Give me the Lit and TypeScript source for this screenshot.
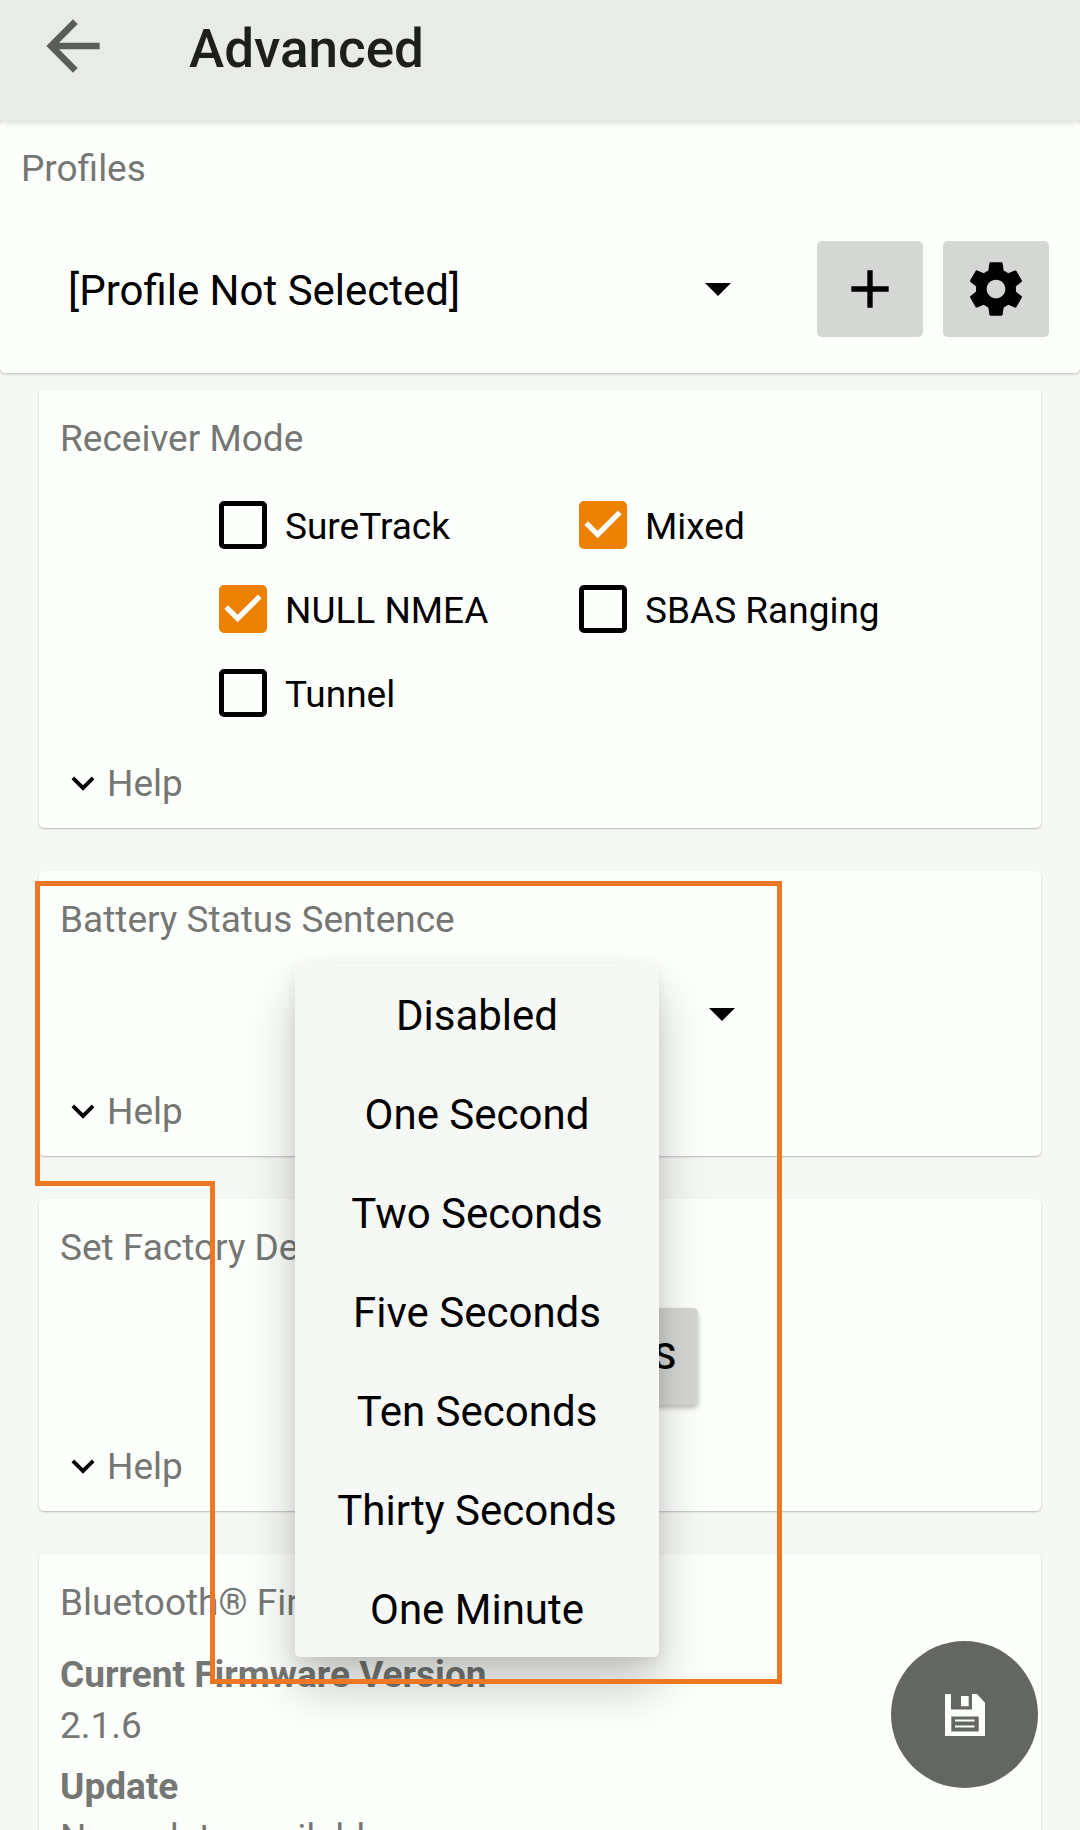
import { LitElement, html, css, svg, nothing } from "lit";
import { customElement, property, state } from "lit/decorators.js";

const ICONS = {
  back: svg`<path d="M20 11H7.83l5.59-5.59L12 4l-8 8 8 8 1.41-1.41L7.83 13H20v-2z"/>`,
  add: svg`<path d="M19 13h-6v6h-2v-6H5v-2h6V5h2v6h6v2z"/>`,
  gear: svg`<path d="M19.43 12.98c.04-.32.07-.64.07-.98s-.03-.66-.07-.98l2.11-1.65c.19-.15.24-.42.12-.64l-2-3.46c-.12-.22-.39-.3-.61-.22l-2.49 1c-.52-.4-1.08-.73-1.69-.98l-.38-2.65C14.46 2.18 14.25 2 14 2h-4c-.25 0-.46.18-.49.42l-.38 2.65c-.61.25-1.17.59-1.69.98l-2.49-1c-.23-.09-.49 0-.61.22l-2 3.46c-.13.22-.07.49.12.64l2.11 1.65c-.04.32-.07.65-.07.98s.03.66.07.98l-2.11 1.65c-.19.15-.24.42-.12.64l2 3.46c.12.22.39.3.61.22l2.49-1c.52.4 1.08.73 1.69.98l.38 2.65c.03.24.24.42.49.42h4c.25 0 .46-.18.49-.42l.38-2.65c.61-.25 1.17-.59 1.69-.98l2.49 1c.23.09.49 0 .61-.22l2-3.46c.12-.22.07-.49-.12-.64l-2.11-1.65zM12 15.5c-1.93 0-3.5-1.57-3.5-3.5s1.57-3.5 3.5-3.5 3.5 1.57 3.5 3.5-1.57 3.5-3.5 3.5z"/>`,
  more: svg`<path d="M16.59 8.59L12 13.17 7.41 8.59 6 10l6 6 6-6z"/>`,
  save: svg`<path fill-rule="evenodd" d="M0 0H6V15.5H27V0H32L40 8.7V42H0ZM6.3 22.5V37.5H33.7V22.5ZM16 2H23.7V12.3H16ZM10 25.5H29.5V27.5H10ZM10 31.6H29.5V33.6H10Z"/>`,
};

const sheet = css`
  * { box-sizing: border-box; }
  button, select, input { font: inherit; color: inherit; margin: 0; }
  button { border: 0; padding: 0; background: none; cursor: pointer; }
  svg { display: block; fill: currentColor; }
`;

@customElement("option-spinner")
class OptionSpinner extends LitElement {
  @property() label = "";
  @property({ type: Array }) options: string[] = [];
  @property({ type: Boolean, reflect: true }) centered = false;

  static styles = [sheet, css`
    :host { display: block; }
    .spinner { display: grid; align-items: center; height: 100%; }
    .select {
      grid-area: 1 / 1; width: 100%; height: 100%; appearance: none; border: 0;
      background: none; padding: 3px 126px 0 0; font-size: 42px; line-height: 50px;
    }
    :host([centered]) .select { text-align: center; text-align-last: center; }
    .caret { grid-area: 1 / 1; justify-self: end; margin-right: 50px; pointer-events: none; }
  `];

  render() {
    return html`<div class="spinner">
      <select class="select" aria-label=${this.label}>
        ${this.options.map((o) => html`<option>${o}</option>`)}
      </select>
      <svg class="caret" width="26" height="13" viewBox="0 0 26 13"><path d="M0 0H26L13 13Z"/></svg>
    </div>`;
  }
}

@customElement("setting-card")
class SettingCard extends LitElement {
  @property() heading = "";
  @property({ type: Boolean }) help = false;

  static styles = [sheet, css`
    :host {
      display: block; padding: 27px 21px 22px; border-radius: 5px; background: #fdfffc;
      box-shadow: 0 1px 2px rgba(0, 0, 0, .25);
    }
    .heading { margin: 0 0 22px; font-size: 37px; line-height: 44px; font-weight: 400; color: #757774; }
    .help {
      display: flex; align-items: center; margin-top: 27px;
      font-size: 37px; line-height: 44px; color: #757774;
    }
    .chevron { color: #000; margin: -3px 1px 0 0; }
  `];

  render() {
    return html`
      <h2 class="heading">${this.heading}</h2>
      <slot></slot>
      ${this.help
        ? html`<button class="help" aria-expanded="false">
            <svg class="chevron" width="46" height="46" viewBox="0 0 24 24">${ICONS.more}</svg>Help
          </button>`
        : nothing}
    `;
  }
}

@customElement("app-root")
class AppRoot extends LitElement {
  @state() private modes = [
    { name: "SureTrack", on: false },
    { name: "Mixed", on: true },
    { name: "NULL NMEA", on: true },
    { name: "SBAS Ranging", on: false },
    { name: "Tunnel", on: false },
  ];

  private intervals = [
    "Disabled", "One Second", "Two Seconds", "Five Seconds",
    "Ten Seconds", "Thirty Seconds", "One Minute",
  ];

  static styles = [sheet, css`
    :host {
      display: flex; flex-direction: column; height: 100vh; overflow: hidden; position: relative;
      background: #f6f8f5; color: #000; font-family: Roboto, "Liberation Sans", sans-serif;
    }
    .bar {
      flex: none; display: flex; align-items: center; gap: 76px; padding: 6px 33px 34px;
      background: #e9ebe8; box-shadow: 0 2px 8px rgba(0, 0, 0, .16); position: relative; z-index: 2;
    }
    .back { color: #5b5d5a; }
    .title { margin: 6px 0 0; font-size: 53px; line-height: 60px; font-weight: 500; color: #1d1f1c; }

    .profiles {
      flex: none; padding: 27px 31px 36px 21px; background: #fdfffc; border-radius: 5px;
      box-shadow: 0 1px 3px rgba(0, 0, 0, .25);
    }
    .caption { margin: 0 0 50px; font-size: 37px; line-height: 44px; font-weight: 400; color: #757774; }
    .profile-row { display: flex; gap: 20px; height: 96px; padding-left: 47px; }
    .profile { flex: 1; margin-right: 16px; }
    .square {
      flex: none; width: 106px; display: grid; place-items: center;
      border-radius: 5px; background: #d5d7d4;
    }

    .cards {
      flex: 1; min-height: 0; overflow-y: auto; scrollbar-width: none;
      display: flex; flex-direction: column; gap: 43px; padding: 17px 39px 0;
    }
    .card { flex: none; }

    .modes { display: grid; grid-template-columns: 1fr 1fr; max-width: 720px; margin: 0 auto; }
    .mode {
      display: grid; grid-template-columns: 48px 1fr; column-gap: 18px; align-items: center;
      height: 84px; padding-left: 39px; font-size: 37px; line-height: 44px;
    }
    .box {
      grid-area: 1 / 1; width: 48px; height: 48px; appearance: none;
      border: 5px solid #000; border-radius: 5px;
    }
    .box:checked { background: #ec8100; border-color: #ec8100; }
    .tick { grid-area: 1 / 1; color: #fff; pointer-events: none; }
    .name { grid-area: 1 / 2; padding-top: 4px; }

    .battery { position: relative; z-index: 1; }
    .interval { position: relative; max-width: 490px; height: 99px; margin: 0 auto; }
    .interval-select { height: 100px; }
    .popup {
      position: absolute; left: 0; top: 0; width: 364px; margin: 0; padding: 0; list-style: none;
      border-radius: 5px; background: #f6f8f5;
      box-shadow: 0 30px 50px rgba(0, 0, 0, .22), 0 4px 14px rgba(0, 0, 0, .08);
    }
    .choice {
      display: block; padding: 27px 0 22px; text-align: center;
      font-size: 42px; line-height: 50px; cursor: pointer;
    }
    .callout {
      position: absolute; left: -4px; top: 10px; pointer-events: none;
      fill: none; stroke: #ec7725; stroke-width: 5px;
    }

    .reset {
      display: block; margin: 38px auto 40px; padding: 27px 22px 26px; border-radius: 5px;
      background: #d5d7d4; font-size: 37px; line-height: 44px; font-weight: 500;
      min-width: 316px; text-align: right; white-space: nowrap;
      box-shadow: 0 3px 5px rgba(0, 0, 0, .25);
    }

    .facts { margin: 28px 0 0; font-size: 37px; line-height: 44px; color: #757774; }
    .term { font-weight: 700; }
    .value { margin: 7px 0 17px; }

    .save {
      position: absolute; right: 42px; bottom: 42px; z-index: 3; width: 147px; height: 147px;
      display: grid; place-items: center; border-radius: 50%; background: #646662; color: #fdfffc;
    }
  `];

  private toggle(index: number) {
    this.modes = this.modes.map((m, i) => (i === index ? { ...m, on: !m.on } : m));
  }

  render() {
    return html`
      <header class="bar">
        <button class="back" aria-label="Back">
          <svg width="80" height="80" viewBox="0 0 24 24">${ICONS.back}</svg>
        </button>
        <h1 class="title">Advanced</h1>
      </header>

      <section class="profiles">
        <h2 class="caption">Profiles</h2>
        <div class="profile-row">
          <option-spinner class="profile" label="Profile" .options=${["[Profile Not Selected]"]}></option-spinner>
          <button class="square" aria-label="Add profile">
            <svg width="64" height="64" viewBox="0 0 24 24">${ICONS.add}</svg>
          </button>
          <button class="square" aria-label="Manage profiles">
            <svg width="64" height="64" viewBox="0 0 24 24">${ICONS.gear}</svg>
          </button>
        </div>
      </section>

      <main class="cards">
        <setting-card class="card" heading="Receiver Mode" help>
          <div class="modes">
            ${this.modes.map((m, i) => html`
              <label class="mode">
                <input class="box" type="checkbox" .checked=${m.on} @change=${() => this.toggle(i)} />
                ${m.on
                  ? html`<svg class="tick" width="48" height="48" viewBox="3 3 18 18">
                      <path d="M10 17l-5-5 1.41-1.41L10 14.17l7.59-7.59L19 8z"/>
                    </svg>`
                  : nothing}
                <span class="name">${m.name}</span>
              </label>`)}
          </div>
        </setting-card>

        <setting-card class="card battery" heading="Battery Status Sentence" help>
          <div class="interval">
            <option-spinner class="interval-select" centered label="Battery Status Sentence"
              .options=${this.intervals}></option-spinner>
            <ul class="popup" role="listbox" aria-label="Battery Status Sentence">
              ${this.intervals.map((t, i) => html`
                <li class="choice" role="option" aria-selected=${i === 0 ? "true" : "false"}>${t}</li>`)}
            </ul>
          </div>
          <svg class="callout" width="748" height="804" viewBox="0 0 748 804" aria-hidden="true">
            <path d="M2.5 2.5H744.5V800.5H177.5V302.5H2.5Z"/>
          </svg>
        </setting-card>

        <setting-card class="card" heading="Set Factory Defaults" help>
          <button class="reset">SET DEFAULTS</button>
        </setting-card>

        <setting-card class="card" heading="Bluetooth® Firmware">
          <dl class="facts">
            <dt class="term">Current Firmware Version</dt>
            <dd class="value">2.1.6</dd>
            <dt class="term">Update</dt>
            <dd class="value">No update available</dd>
          </dl>
        </setting-card>
      </main>

      <button class="save" aria-label="Save">
        <svg width="40" height="42" viewBox="0 0 40 42">${ICONS.save}</svg>
      </button>
    `;
  }
}
